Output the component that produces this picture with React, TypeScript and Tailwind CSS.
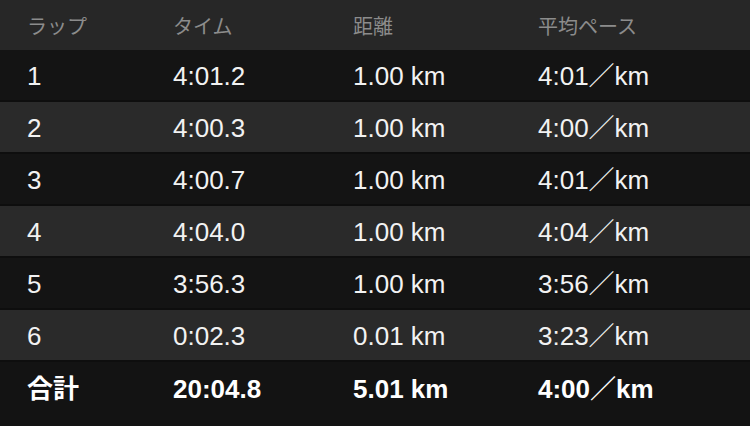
import React from 'react';

type Lap = { lap: string; time: string; dist: string; pace: string };

const laps: Lap[] = [
  { lap: '1', time: '4:01.2', dist: '1.00 km', pace: '4:01／km' },
  { lap: '2', time: '4:00.3', dist: '1.00 km', pace: '4:00／km' },
  { lap: '3', time: '4:00.7', dist: '1.00 km', pace: '4:01／km' },
  { lap: '4', time: '4:04.0', dist: '1.00 km', pace: '4:04／km' },
  { lap: '5', time: '3:56.3', dist: '1.00 km', pace: '3:56／km' },
  { lap: '6', time: '0:02.3', dist: '0.01 km', pace: '3:23／km' },
];

const cols = 'grid grid-cols-[146px_180px_185px_1fr] items-center pl-[27px]';

export default function App() {
  return (
    <div
      className="w-[750px] h-[426px] bg-[#131313] text-white overflow-hidden"
      style={{ fontFamily: '"Liberation Sans", "Noto Sans CJK JP", sans-serif' }}
    >
      <div className={`${cols} h-[50px] pt-[3px] bg-[#272727] text-[20px] text-[#8c8c8c]`}>
        <div>ラップ</div>
        <div>タイム</div>
        <div>距離</div>
        <div>平均ペース</div>
      </div>

      {laps.map((l, i) => (
        <div
          key={l.lap}
          className={`${cols} h-[52px] pt-[3px] text-[26px] text-[#f2f2f2] border-b-2 border-[#0e0e0e] ${
            i % 2 === 0 ? 'bg-[#141414]' : 'bg-[#2a2a2a]'
          }`}
        >
          <div>{l.lap}</div>
          <div>{l.time}</div>
          <div>{l.dist}</div>
          <div>{l.pace}</div>
        </div>
      ))}

      <div className={`${cols} h-[52px] pt-[2px] text-[26px] font-bold bg-[#131313]`}>
        <div>合計</div>
        <div>20:04.8</div>
        <div>5.01 km</div>
        <div>4:00／km</div>
      </div>
    </div>
  );
}
